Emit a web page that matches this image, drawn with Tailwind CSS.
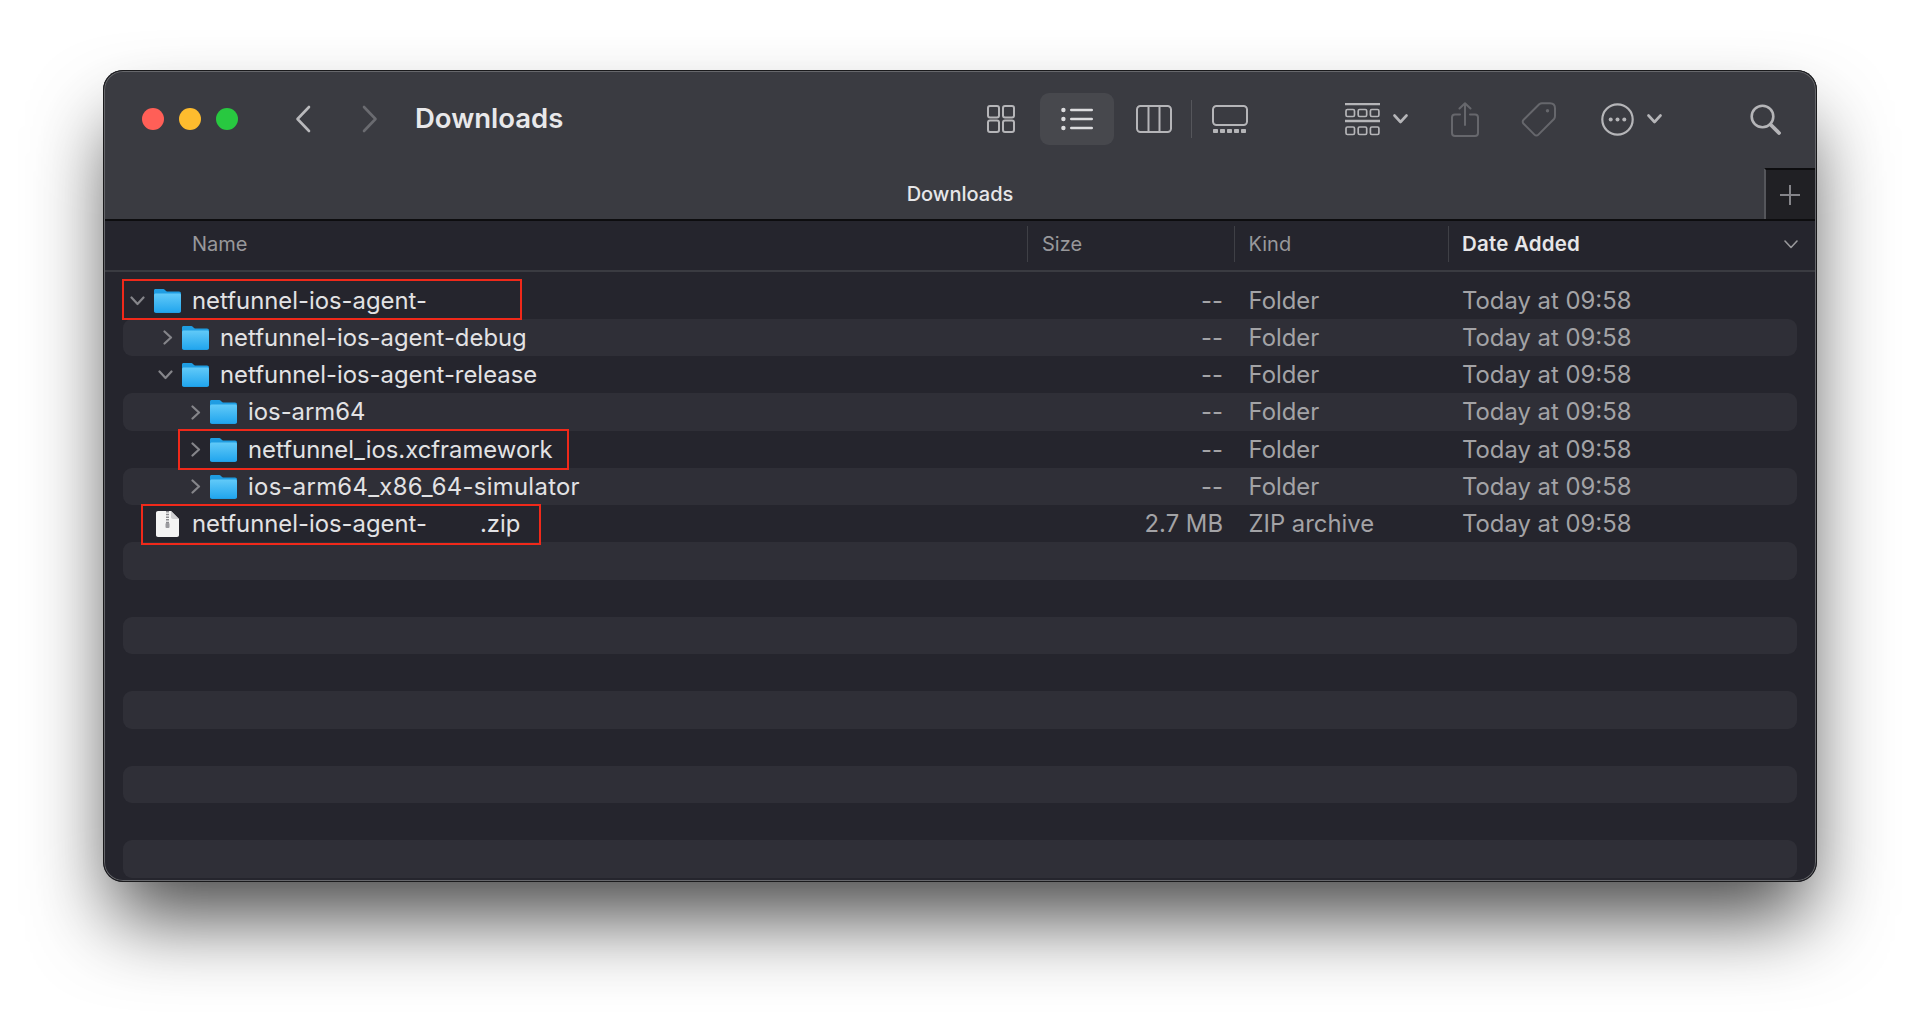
<!DOCTYPE html>
<html>
<head>
<meta charset="utf-8">
<title>Downloads</title>
<script src="https://cdn.jsdelivr.net/npm/@tailwindcss/browser@4"></script>
</head>
<body class="bg-white h-[1020px] overflow-hidden pt-[70px] font-['Inter','Liberation_Sans',sans-serif]">
<svg class="absolute w-0 h-0" width="0" height="0">
  <defs>
    <linearGradient id="fg" x1="0" y1="0" x2="0" y2="1"><stop offset="0" stop-color="#62caf8"/><stop offset="1" stop-color="#22a6ee"/></linearGradient>
    <symbol id="folder" viewBox="0 0 27 24">
      <path d="M1.5 0H9.5C11 0 11.5 2.5 13 2.5H25C26.2 2.5 27 3.3 27 4.5V22C27 23.2 26.2 24 25 24H2C.8 24 0 23.2 0 22V1.5C0 .6 .6 0 1.5 0Z" fill="#1f9de2"/>
      <path d="M0 6C0 5 .8 4.4 2 4.4H25C26.2 4.4 27 5 27 6V21.5C27 22.7 26.2 23.2 25 23.2H2C.8 23.2 0 22.7 0 21.5Z" fill="url(#fg)"/>
    </symbol>
    <symbol id="cr" viewBox="0 0 10 15"><path d="M1.5 1.5L8 7.5L1.5 13.5" fill="none" stroke="#85858a" stroke-width="2.2" stroke-linecap="round" stroke-linejoin="round"/></symbol>
    <symbol id="cd" viewBox="0 0 15 10"><path d="M1.5 1.5L7.5 8L13.5 1.5" fill="none" stroke="#85858a" stroke-width="2.2" stroke-linecap="round" stroke-linejoin="round"/></symbol>
  </defs>
</svg>
<div class="relative ml-[103px] w-[1714px] h-[812px] rounded-[20px] overflow-hidden bg-[#25252d] flex flex-col text-[#a3a3a6] shadow-[0_45px_80px_-10px_rgba(0,0,0,0.72)]">
  <!-- toolbar -->
  <div class="h-[98px] bg-[#3a3b41] flex items-center shrink-0">
    <div class="flex gap-[15.25px] ml-[38.5px]">
      <div class="w-[22px] h-[22px] rounded-full bg-[#ff5f57]"></div>
      <div class="w-[22px] h-[22px] rounded-full bg-[#febc2e]"></div>
      <div class="w-[22px] h-[22px] rounded-full bg-[#28c840]"></div>
    </div>
    <svg class="ml-[57px]" width="16" height="28" viewBox="0 0 16 28"><path d="M14 2L2.5 14L14 26" fill="none" stroke="#b9b9bc" stroke-width="2.6" stroke-linecap="round" stroke-linejoin="round"/></svg>
    <svg class="ml-[51px]" width="16" height="28" viewBox="0 0 16 28"><path d="M2 2L13.5 14L2 26" fill="none" stroke="#6a6b70" stroke-width="2.6" stroke-linecap="round" stroke-linejoin="round"/></svg>
    <div class="ml-[37px] text-[27.5px] leading-none font-semibold text-[#e8e8ea]">Downloads</div>
    <!-- icon view -->
    <svg class="ml-[423.5px]" width="28" height="28" viewBox="0 0 28 28" fill="none" stroke="#b5b5b8" stroke-width="2"><rect x="1" y="1" width="11" height="11.5" rx="2"/><rect x="16" y="1" width="11" height="11.5" rx="2"/><rect x="1" y="15.5" width="11" height="11.5" rx="2"/><rect x="16" y="15.5" width="11" height="11.5" rx="2"/></svg>
    <div class="ml-[25px] w-[74px] h-[52px] rounded-[9px] bg-[#47484d] flex items-center justify-center">
      <svg width="32" height="24" viewBox="0 0 32 24" fill="#dcdcde"><circle cx="2.4" cy="3" r="2.2"/><circle cx="2.4" cy="12" r="2.2"/><circle cx="2.4" cy="21" r="2.2"/><rect x="9" y="1.8" width="23" height="2.4" rx="1.2"/><rect x="9" y="10.8" width="23" height="2.4" rx="1.2"/><rect x="9" y="19.8" width="23" height="2.4" rx="1.2"/></svg>
    </div>
    <svg class="ml-[22px]" width="36" height="28" viewBox="0 0 36 28" fill="none" stroke="#b5b5b8" stroke-width="2"><rect x="1" y="1" width="34" height="26" rx="3.5"/><path d="M12.5 1V27M23.5 1V27"/></svg>
    <div class="ml-[19px] w-px h-[38px] bg-[#55565b]"></div>
    <svg class="ml-[20px]" width="36" height="28" viewBox="0 0 36 28" fill="none"><rect x="1" y="1" width="34" height="19" rx="3.5" stroke="#b5b5b8" stroke-width="2"/><g fill="#b5b5b8"><rect x="1" y="24" width="5" height="4" rx=".8"/><rect x="8" y="24" width="5" height="4" rx=".8"/><rect x="15" y="24" width="5" height="4" rx=".8"/><rect x="22" y="24" width="5" height="4" rx=".8"/><rect x="29" y="24" width="5" height="4" rx=".8"/></g></svg>
    <!-- group -->
    <svg class="ml-[97px]" width="35" height="33" viewBox="0 0 35 33" fill="none" stroke="#b5b5b8"><path d="M0 1H35M0 18H35" stroke-width="2.4"/><g stroke-width="1.7"><rect x="1" y="6.5" width="8.5" height="7" rx="1.4"/><rect x="13.2" y="6.5" width="8.5" height="7" rx="1.4"/><rect x="25.4" y="6.5" width="8.5" height="7" rx="1.4"/><rect x="1" y="24" width="8.5" height="7.5" rx="1.4"/><rect x="13.2" y="24" width="8.5" height="7.5" rx="1.4"/><rect x="25.4" y="24" width="8.5" height="7.5" rx="1.4"/></g></svg>
    <svg class="ml-[13px]" width="15" height="10" viewBox="0 0 15 10"><path d="M1.5 1.5L7.5 8L13.5 1.5" fill="none" stroke="#b5b5b8" stroke-width="2.6" stroke-linecap="round" stroke-linejoin="round"/></svg>
    <!-- share -->
    <svg class="ml-[43px]" width="28" height="35" viewBox="0 0 28 35" fill="none" stroke="#66676c" stroke-width="2" stroke-linecap="round" stroke-linejoin="round"><path d="M9 12.5H4C2 12.5 1 13.5 1 15.5V31C1 33 2 34 4 34H24C26 34 27 33 27 31V15.5C27 13.5 26 12.5 24 12.5H19"/><path d="M14 23V1.5M8.5 6.5L14 1.2L19.5 6.5"/></svg>
    <!-- tag -->
    <svg class="ml-[42px]" width="36" height="36" viewBox="0 0 36 36" fill="none" stroke="#66676c" stroke-width="2" stroke-linejoin="round"><path d="M21 2.2H29C32.2 2.2 34 4 34 7.2V15C34 16.4 33.6 17.3 33 18L17.4 33.6C16.2 34.8 14.6 34.8 13.4 33.6L2.6 22.8C1.4 21.6 1.4 20 2.6 18.8L18.2 3.2C19 2.6 19.8 2.2 21 2.2Z"/><circle cx="26.5" cy="9.7" r="1.7" fill="#66676c" stroke="none"/></svg>
    <!-- more -->
    <svg class="ml-[44px]" width="33" height="33" viewBox="0 0 33 33" fill="none"><circle cx="16.5" cy="16.5" r="15.2" stroke="#b5b5b8" stroke-width="2.2"/><g fill="#b5b5b8"><circle cx="9.7" cy="16.5" r="2"/><circle cx="16.5" cy="16.5" r="2"/><circle cx="23.3" cy="16.5" r="2"/></g></svg>
    <svg class="ml-[13px]" width="15" height="10" viewBox="0 0 15 10"><path d="M1.5 1.5L7.5 8L13.5 1.5" fill="none" stroke="#b5b5b8" stroke-width="2.6" stroke-linecap="round" stroke-linejoin="round"/></svg>
    <!-- search -->
    <svg class="ml-[88px]" width="31" height="31" viewBox="0 0 31 31" fill="none" stroke="#b5b5b8" stroke-linecap="round"><circle cx="12.5" cy="12.5" r="10.8" stroke-width="2.6"/><path d="M20.5 20.5L29 29" stroke-width="3.8"/></svg>
  </div>
  <!-- tab row -->
  <div class="h-[53px] bg-[#3a3b41] border-b-2 border-[#0d0d0f] flex shrink-0">
    <div class="flex-1 flex items-center justify-center text-[20px] font-medium text-[#e6e6e8] pl-[53px]">Downloads</div>
    <div class="w-[53px] bg-[#202024] border-t-2 border-t-[#0d0d0f] border-l-2 border-l-[#55565b] flex items-center justify-center pr-[4px]">
      <svg width="20" height="20" viewBox="0 0 20 20" stroke="#85858a" stroke-width="2"><path d="M10 0V20M0 10H20"/></svg>
    </div>
  </div>
  <!-- header -->
  <div class="h-[51px] pb-[3px] border-b-2 border-[#3a3b41] flex items-center text-[20px] text-[#98989b] shrink-0">
    <div class="w-[925px] h-[36px] pl-[89px] flex items-center border-r border-[#3f4046]">Name</div>
    <div class="w-[207px] h-[36px] pl-[14px] flex items-center border-r border-[#3f4046]">Size</div>
    <div class="w-[214px] h-[36px] pl-[13.5px] flex items-center border-r border-[#3f4046]">Kind</div>
    <div class="flex-1 pl-[13px] flex items-center font-semibold text-[20.5px] tracking-[0.2px] text-[#e6e6e8]">Date Added</div>
    <svg class="mr-[19px]" width="14" height="9" viewBox="0 0 14 9"><path d="M1 1L7 7.5L13 1" fill="none" stroke="#98989b" stroke-width="1.6" stroke-linecap="round" stroke-linejoin="round"/></svg>
  </div>
  <!-- list -->
  <div class="pt-[9.5px] px-[20px] flex flex-col text-[23.85px]">
    <div class="h-[37.25px] shrink-0 flex items-center pt-[1px]"><div class="w-[905px] flex items-center pl-[7px]"><svg width="15" height="10"><use href="#cd"/></svg><svg class="ml-[9px]" width="27" height="24"><use href="#folder"/></svg><span class="ml-[11px] text-[#e2e2e4]">netfunnel-ios-agent-</span></div><div class="w-[195px] text-right">--</div><div class="w-[239px] pl-[25.5px]">Folder</div><div>Today at 09:58</div></div>
    <div class="h-[37.25px] shrink-0 flex items-center pt-[1px] bg-[#2f2f37] rounded-[9px]"><div class="w-[905px] flex items-center pl-[40px]"><svg width="10" height="15"><use href="#cr"/></svg><svg class="ml-[9px]" width="27" height="24"><use href="#folder"/></svg><span class="ml-[11px] text-[#e2e2e4]">netfunnel-ios-agent-debug</span></div><div class="w-[195px] text-right">--</div><div class="w-[239px] pl-[25.5px]">Folder</div><div>Today at 09:58</div></div>
    <div class="h-[37.25px] shrink-0 flex items-center pt-[1px]"><div class="w-[905px] flex items-center pl-[35px]"><svg width="15" height="10"><use href="#cd"/></svg><svg class="ml-[9px]" width="27" height="24"><use href="#folder"/></svg><span class="ml-[11px] text-[#e2e2e4]">netfunnel-ios-agent-release</span></div><div class="w-[195px] text-right">--</div><div class="w-[239px] pl-[25.5px]">Folder</div><div>Today at 09:58</div></div>
    <div class="h-[37.25px] shrink-0 flex items-center pt-[1px] bg-[#2f2f37] rounded-[9px]"><div class="w-[905px] flex items-center pl-[68px]"><svg width="10" height="15"><use href="#cr"/></svg><svg class="ml-[9px]" width="27" height="24"><use href="#folder"/></svg><span class="ml-[11px] text-[#e2e2e4]">ios-arm64</span></div><div class="w-[195px] text-right">--</div><div class="w-[239px] pl-[25.5px]">Folder</div><div>Today at 09:58</div></div>
    <div class="h-[37.25px] shrink-0 flex items-center pt-[1px]"><div class="w-[905px] flex items-center pl-[68px]"><svg width="10" height="15"><use href="#cr"/></svg><svg class="ml-[9px]" width="27" height="24"><use href="#folder"/></svg><span class="ml-[11px] text-[#e2e2e4]">netfunnel_ios.xcframework</span></div><div class="w-[195px] text-right">--</div><div class="w-[239px] pl-[25.5px]">Folder</div><div>Today at 09:58</div></div>
    <div class="h-[37.25px] shrink-0 flex items-center pt-[1px] bg-[#2f2f37] rounded-[9px]"><div class="w-[905px] flex items-center pl-[68px]"><svg width="10" height="15"><use href="#cr"/></svg><svg class="ml-[9px]" width="27" height="24"><use href="#folder"/></svg><span class="ml-[11px] text-[#e2e2e4] tracking-[0.3px]">ios-arm64_x86_64-simulator</span></div><div class="w-[195px] text-right">--</div><div class="w-[239px] pl-[25.5px]">Folder</div><div>Today at 09:58</div></div>
    <div class="h-[37.25px] shrink-0 flex items-center pt-[1px]"><div class="w-[905px] flex items-center pl-[33px]">
      <svg width="23" height="26" viewBox="0 0 23 26"><path d="M2 0H15L23 8V24C23 25.2 22.2 26 21 26H2C.8 26 0 25.2 0 24V2C0 .8 .8 0 2 0Z" fill="#f4f4f4"/><path d="M15 0L23 8H17C15.8 8 15 7.2 15 6Z" fill="#cfcfd1"/><path d="M11.5 0V13" stroke="#8c8c90" stroke-width="3" stroke-dasharray="1.5 1.2"/><rect x="9.5" y="12" width="4" height="5" rx="1" fill="#9a9a9e"/></svg>
      <span class="ml-[13px] text-[#e2e2e4] whitespace-pre">netfunnel-ios-agent-<span class="inline-block w-[53px]"></span>.zip</span></div><div class="w-[195px] text-right">2.7 MB</div><div class="w-[239px] pl-[25.5px]">ZIP archive</div><div>Today at 09:58</div></div>
    <div class="h-[37.25px] bg-[#2f2f37] rounded-[9px] shrink-0"></div>
    <div class="h-[37.25px] shrink-0"></div>
    <div class="h-[37.25px] bg-[#2f2f37] rounded-[9px] shrink-0"></div>
    <div class="h-[37.25px] shrink-0"></div>
    <div class="h-[37.25px] bg-[#2f2f37] rounded-[9px] shrink-0"></div>
    <div class="h-[37.25px] shrink-0"></div>
    <div class="h-[37.25px] bg-[#2f2f37] rounded-[9px] shrink-0"></div>
    <div class="h-[37.25px] shrink-0"></div>
    <div class="h-[37.25px] bg-[#2f2f37] rounded-[9px] shrink-0"></div>
  </div>
  <!-- annotation boxes -->
  <div class="absolute left-[19px] top-[209px] w-[400px] h-[41px] border-2 border-[#f0291a]"></div>
  <div class="absolute left-[75px] top-[359px] w-[391px] h-[41px] border-2 border-[#f0291a]"></div>
  <div class="absolute left-[38px] top-[434px] w-[400px] h-[41px] border-2 border-[#f0291a]"></div>
  <!-- window edge -->
  <div class="absolute inset-0 rounded-[20px] border border-[#1a1a1c] shadow-[inset_0_0_0_1px_#66676b] pointer-events-none"></div>
</div>
</body>
</html>
